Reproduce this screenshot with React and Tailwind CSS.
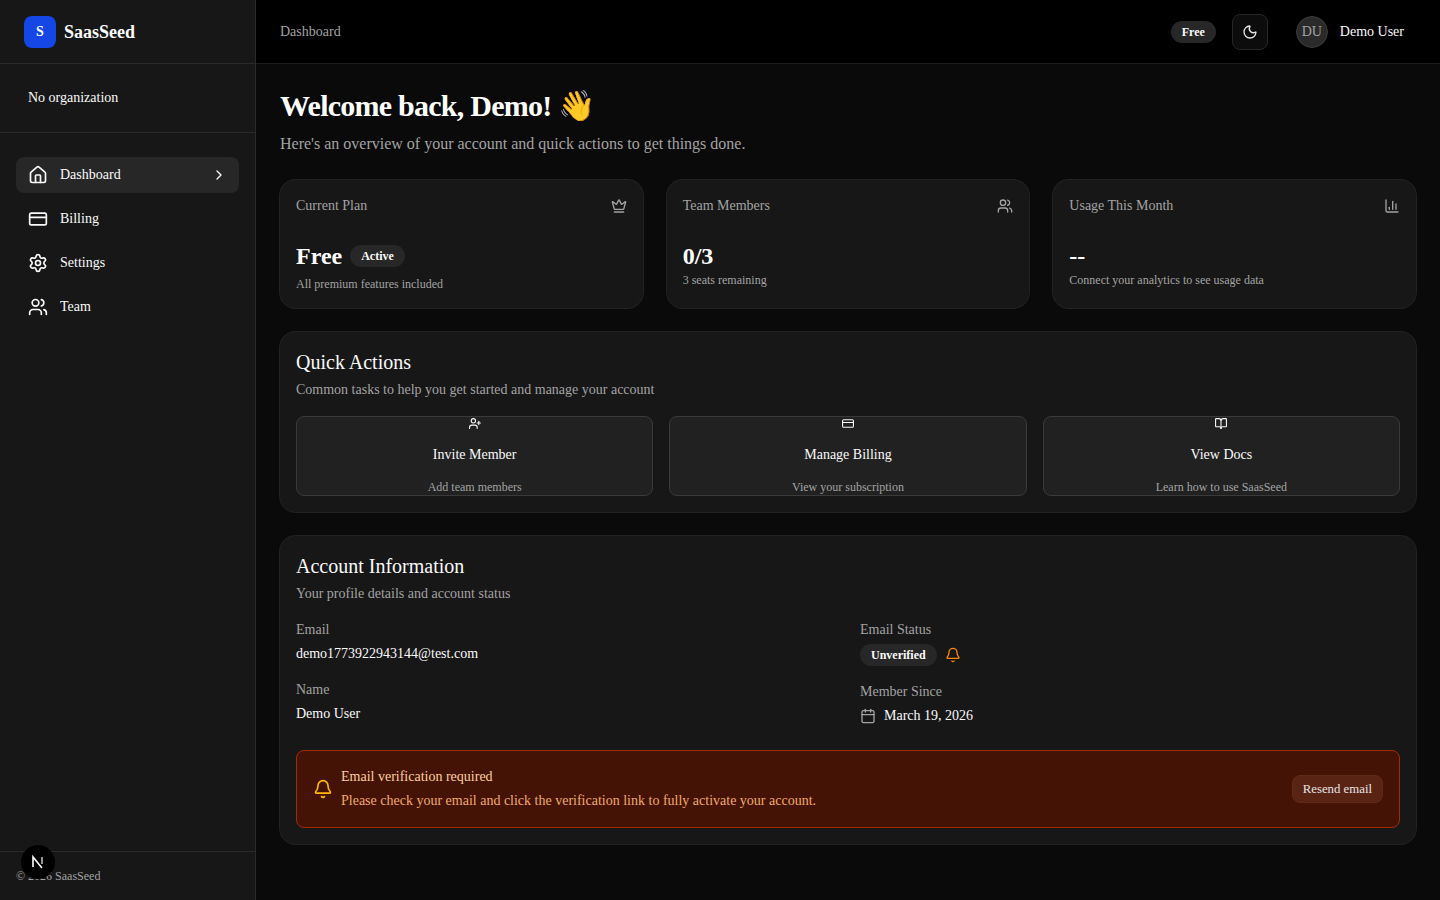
import React from 'react';
import {
  Bell, BookOpen, Calendar, ChartColumn, ChevronRight, CreditCard, Crown, House, Moon, Settings, UserPlus, Users,
} from 'lucide-react';

const navItems = [
  { label: 'Dashboard', icon: House, active: true },
  { label: 'Billing', icon: CreditCard },
  { label: 'Settings', icon: Settings },
  { label: 'Team', icon: Users },
];

const actions = [
  { label: 'Invite Member', sub: 'Add team members', icon: UserPlus },
  { label: 'Manage Billing', sub: 'View your subscription', icon: CreditCard },
  { label: 'View Docs', sub: 'Learn how to use SaasSeed', icon: BookOpen },
];

function Badge({ children }) {
  return (
    <span className='inline-flex h-[22px] items-center rounded-full bg-[#272727] px-[11px] text-xs font-bold text-[#fafafa]'>
      {children}
    </span>
  );
}

function Sidebar() {
  return (
    <aside className='relative flex h-screen w-64 shrink-0 flex-col border-r border-[#2a2a2a] bg-[#171717]'>
      <div className='flex h-16 shrink-0 items-center gap-2 border-b border-[#2a2a2a] px-6'>
        <div className='flex h-8 w-8 items-center justify-center rounded-lg bg-[#1447e6] text-sm font-bold text-white'>S</div>
        <span className='text-lg font-bold text-[#fafafa]'>SaasSeed</span>
      </div>
      <div className='flex h-[69px] shrink-0 items-center border-b border-[#2a2a2a] px-7 text-sm text-[#fafafa]'>
        No organization
      </div>
      <nav className='flex flex-1 flex-col gap-2 px-4 pt-6'>
        {navItems.map(({ label, icon: Icon, active }) => (
          <div key={label} className={`flex h-9 items-center gap-3 rounded-lg px-3 text-sm text-[#fafafa] ${active ? 'bg-[#272727]' : ''}`}>
            <Icon size={20} strokeWidth={2} />
            <span className='flex-1'>{label}</span>
            {active && <ChevronRight size={16} />}
          </div>
        ))}
      </nav>
      <div className='flex h-[49px] shrink-0 items-center border-t border-[#2a2a2a] px-4 text-xs text-[#a3a3a3]'>
        © 2026 SaasSeed
      </div>
      <div className='absolute bottom-[21px] left-[21px] flex h-[34px] w-[34px] items-center justify-center rounded-full bg-black'>
        <svg width='18' height='18' viewBox='0 0 18 18' fill='none'>
          <path d='M4 14V4l9 11' stroke='#ffffff' strokeWidth='1.6' />
          <path d='M13 4v7' stroke='#d4d4d4' strokeWidth='1.4' />
        </svg>
      </div>
    </aside>
  );
}

function Header() {
  return (
    <header className='flex h-16 shrink-0 items-center border-b border-[#1f1f1f] bg-black pl-6 pr-9'>
      <span className='text-sm text-[#a3a3a3]'>Dashboard</span>
      <div className='ml-auto flex items-center'>
        <Badge>Free</Badge>
        <div className='ml-4 flex h-9 w-9 items-center justify-center rounded-lg border border-[#262626] bg-[#0c0c0c] text-[#e5e5e5]'>
          <Moon size={16} />
        </div>
        <div className='ml-7 flex h-8 w-8 items-center justify-center rounded-full border border-[#3a3a3a] bg-[#2a2a2a] text-sm text-[#a3a3a3]'>DU</div>
        <span className='ml-3 text-sm text-[#fafafa]'>Demo User</span>
      </div>
    </header>
  );
}

function StatCard({ title, icon: Icon, children }) {
  return (
    <div className='flex flex-col rounded-2xl bg-[#171717] p-4 ring-1 ring-[#222222]'>
      <div className='flex items-center justify-between text-sm text-[#a3a3a3]'>
        <span>{title}</span>
        <Icon size={16} />
      </div>
      <div className='mt-6'>{children}</div>
    </div>
  );
}

function Field({ label, children, className = '' }) {
  return (
    <div className={className}>
      <div className='text-sm leading-5 text-[#a3a3a3]'>{label}</div>
      {children}
    </div>
  );
}

export default function App() {
  return (
    <div className='flex h-screen overflow-hidden bg-[#0a0a0a] text-[#fafafa] [font-family:"Liberation_Serif",serif]'>
      <Sidebar />
      <div className='flex min-w-0 flex-1 flex-col'>
        <Header />
        <main className='flex flex-col px-6 pt-6'>
          <h1 className='flex h-9 items-center text-3xl font-bold tracking-tight text-white'>Welcome back, Demo! 👋</h1>
          <p className='mt-[8px] text-base leading-6 text-[#a3a3a3]'>Here's an overview of your account and quick actions to get things done.</p>

          <div className='mt-6 grid grid-cols-3 gap-6'>
            <StatCard title='Current Plan' icon={Crown}>
              <div className='flex items-center gap-2'>
                <span className='text-2xl font-bold leading-8 text-white'>Free</span>
                <Badge>Active</Badge>
              </div>
              <p className='mt-1 text-xs leading-4 text-[#a3a3a3]'>All premium features included</p>
            </StatCard>
            <StatCard title='Team Members' icon={Users}>
              <div className='text-2xl font-bold leading-8 text-white'>0/3</div>
              <p className='text-xs leading-4 text-[#a3a3a3]'>3 seats remaining</p>
            </StatCard>
            <StatCard title='Usage This Month' icon={ChartColumn}>
              <div className='text-2xl font-bold leading-8 text-white'>--</div>
              <p className='text-xs leading-4 text-[#a3a3a3]'>Connect your analytics to see usage data</p>
            </StatCard>
          </div>

          <section className='mt-6 rounded-2xl bg-[#171717] p-4 ring-1 ring-[#222222]'>
            <h2 className='text-xl leading-7 text-[#fafafa]'>Quick Actions</h2>
            <p className='mt-1 text-sm leading-5 text-[#a3a3a3]'>Common tasks to help you get started and manage your account</p>
            <div className='mt-4 grid grid-cols-3 gap-4'>
              {actions.map(({ label, sub, icon: Icon }) => (
                <div key={label} className='flex h-20 flex-col items-center justify-center rounded-lg border border-[#3a3a3a] bg-[#212121]'>
                  <Icon size={18} />
                  <span className='mt-[15px] text-sm leading-5'>{label}</span>
                  <span className='mt-[14px] text-xs leading-4 text-[#a3a3a3]'>{sub}</span>
                </div>
              ))}
            </div>
          </section>

          <section className='mt-6 rounded-2xl bg-[#171717] p-4 ring-1 ring-[#222222]'>
            <h2 className='text-xl leading-7 text-[#fafafa]'>Account Information</h2>
            <p className='mt-1 text-sm leading-5 text-[#a3a3a3]'>Your profile details and account status</p>
            <div className='mt-4 grid grid-cols-2 gap-x-6'>
              <div>
                <Field label='Email'>
                  <div className='mt-1 text-sm leading-5'>demo1773922943144@test.com</div>
                </Field>
                <Field label='Name' className='mt-4'>
                  <div className='mt-1 text-sm leading-5'>Demo User</div>
                </Field>
              </div>
              <div>
                <Field label='Email Status'>
                  <div className='mt-1 flex items-center gap-2'>
                    <Badge>Unverified</Badge>
                    <Bell size={16} className='text-[#ff8904]' />
                  </div>
                </Field>
                <Field label='Member Since' className='mt-4'>
                  <div className='mt-1 flex items-center gap-2 text-sm leading-5'>
                    <Calendar size={16} className='text-[#a3a3a3]' />
                    March 19, 2026
                  </div>
                </Field>
              </div>
            </div>
            <div className='mt-6 flex h-[78px] items-center rounded-lg border border-[#9f2d00] bg-[#441306] px-4'>
              <Bell size={20} className='text-[#ffb900]' />
              <div className='ml-2 flex-1'>
                <div className='text-sm leading-5 text-[#fdd09f]'>Email verification required</div>
                <div className='mt-1 text-sm leading-5 text-[#f2aa6c]'>Please check your email and click the verification link to fully activate your account.</div>
              </div>
              <div className='flex h-7 items-center rounded-lg border border-[#5f2a18] bg-[#5a2415] px-[10px] pt-[1px] text-[12.8px] text-[#e5e5e5]'>Resend email</div>
            </div>
          </section>
        </main>
      </div>
    </div>
  );
}
